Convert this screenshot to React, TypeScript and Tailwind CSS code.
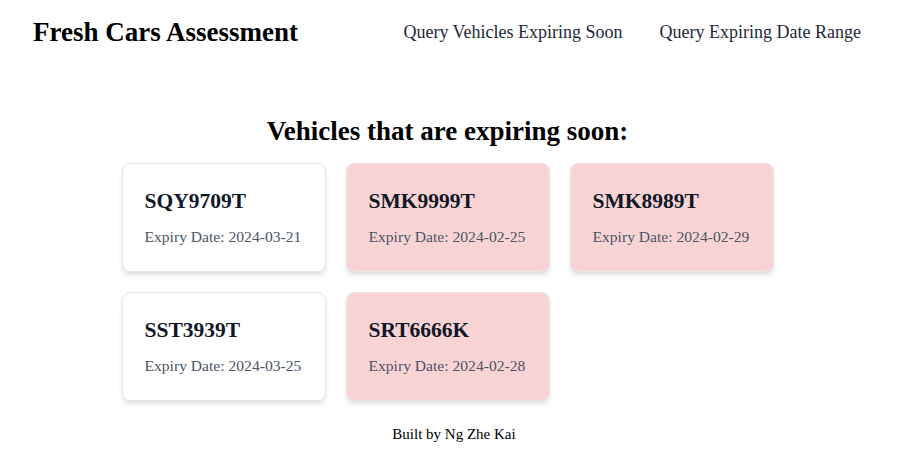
import React from 'react';

interface Vehicle {
  plate: string;
  expiry: string;
  urgent: boolean;
}

const vehicles: Vehicle[] = [
  { plate: 'SQY9709T', expiry: '2024-03-21', urgent: false },
  { plate: 'SMK9999T', expiry: '2024-02-25', urgent: true },
  { plate: 'SMK8989T', expiry: '2024-02-29', urgent: true },
  { plate: 'SST3939T', expiry: '2024-03-25', urgent: false },
  { plate: 'SRT6666K', expiry: '2024-02-28', urgent: true },
];

const VehicleCard = ({ vehicle }: { vehicle: Vehicle }) => (
  <div
    className={`h-[109px] rounded-lg border border-gray-200 px-[22px] pt-[24px] shadow-md ${
      vehicle.urgent ? 'bg-[#fad4d5] border-[#f5cfd0]' : 'bg-white'
    }`}
  >
    <h3 className="text-[21.5px] leading-[26px] font-bold text-gray-900">{vehicle.plate}</h3>
    <p className="mt-[12px] whitespace-nowrap text-[15.6px] leading-[22px] text-gray-600">
      Expiry Date: {vehicle.expiry}
    </p>
  </div>
);

const App = () => {
  return (
    <div className="min-h-[468px] bg-white text-black" style={{ fontFamily: '"Liberation Serif", serif' }}>
      <header className="flex h-16 items-center justify-between pl-[33px] pr-[40px]">
        <h1 className="text-[27px] font-bold leading-none">Fresh Cars Assessment</h1>
        <nav className="flex gap-[37px] text-[18px] text-gray-800">
          <a href="#">Query Vehicles Expiring Soon</a>
          <a href="#">Query Expiring Date Range</a>
        </nav>
      </header>

      <main className="flex flex-col items-center pr-[6px] pt-[51px]">
        <h2 className="text-[27px] font-bold leading-[32px]">Vehicles that are expiring soon:</h2>
        <div className="mt-[16px] grid w-[652px] grid-cols-3 gap-5">
          {vehicles.map((v) => (
            <VehicleCard key={v.plate} vehicle={v} />
          ))}
        </div>
      </main>

      <footer className="pl-[7px] pt-[23px] text-center text-[15px] leading-5">Built by Ng Zhe Kai</footer>
    </div>
  );
};

export default App;
